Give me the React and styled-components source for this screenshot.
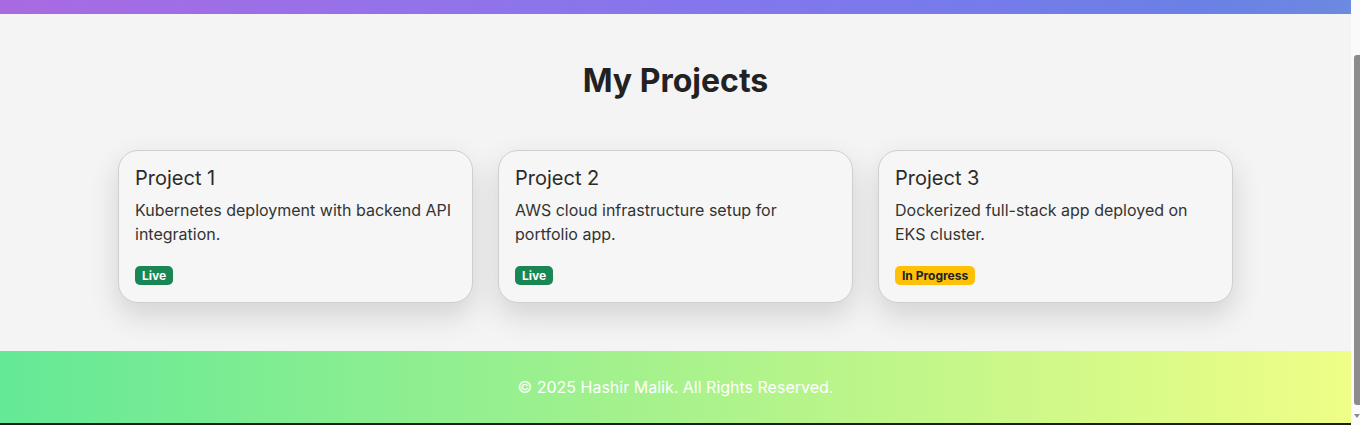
import React, { useLayoutEffect } from "react";
import styled, { createGlobalStyle } from "styled-components";

const GlobalStyle = createGlobalStyle`
  html, body { margin: 0; padding: 0; }
  body {
    margin-right: 9px;
    font-family: Inter, "Noto Sans", "Liberation Sans", sans-serif;
    background: #1e1e1e;
    color: #222;
  }
`;

const Scrollbar = styled.div`
  position: fixed;
  top: 0;
  right: 0;
  bottom: 0;
  width: 9px;
  background: #fafafa;
  z-index: 10;
`;

const Thumb = styled.div`
  position: absolute;
  top: 55px;
  left: 3px;
  right: 0;
  height: 350px;
  background: #8c8c8c;
  border-radius: 3px 0 0 3px;
`;

const Arrow = styled.div`
  position: absolute;
  bottom: 7px;
  right: 0;
  width: 0;
  height: 0;
  border-left: 3px solid transparent;
  border-right: 3px solid transparent;
  border-top: 4px solid #8c8c8c;
`;

const Header = styled.header`
  height: 81px;
  background: linear-gradient(90deg, #a96ae1 0%, #9472ea 30%, #7f78ec 60%, #6b80e6 88%, #6b8ae0 100%);
`;

const Main = styled.main`
  background: #f4f4f4;
  padding: 48px 0 48px;
`;

const Title = styled.h2`
  margin: 0 0 50px;
  font-size: 32px;
  line-height: 38px;
  font-weight: 700;
  text-align: center;
  color: #222;
`;

const Grid = styled.div`
  display: flex;
  justify-content: center;
  gap: 25px;
`;

const Card = styled.article`
  box-sizing: border-box;
  width: 355px;
  height: 153px;
  padding: 15px 16px 16px;
  background: #f6f6f6;
  border: 1px solid #cfcfcf;
  border-radius: 20px;
  box-shadow: 0 12px 30px rgba(0, 0, 0, 0.14);
`;

const CardTitle = styled.h3`
  margin: 0 0 8px;
  font-size: 20px;
  line-height: 24px;
  font-weight: 400;
  color: #2b2b2b;
`;

const CardText = styled.p`
  margin: 0 0 20px;
  font-size: 16px;
  line-height: 24px;
  color: #333;
`;

const Badge = styled.span`
  display: block;
  width: fit-content;
  padding: 0 7px;
  height: 19px;
  line-height: 19px;
  font-size: 12px;
  font-weight: 700;
  border-radius: 5px;
  background: ${(p) => (p.$status === "live" ? "#198754" : "#ffc107")};
  color: ${(p) => (p.$status === "live" ? "#fff" : "#222")};
`;

const Footer = styled.footer`
  height: 72px;
  display: flex;
  align-items: center;
  justify-content: center;
  background: linear-gradient(90deg, #64e996 0%, #a8f28c 50%, #effe86 100%);
  color: #fff;
  font-size: 16px;
`;

const Bottom = styled.div`
  height: 27px;
  background: #1e1e1e;
`;

const projects = [
  { name: "Project 1", text: "Kubernetes deployment with backend API integration.", status: "live", label: "Live" },
  { name: "Project 2", text: "AWS cloud infrastructure setup for portfolio app.", status: "live", label: "Live" },
  { name: "Project 3", text: "Dockerized full-stack app deployed on EKS cluster.", status: "progress", label: "In Progress" },
];

export default function App() {
  useLayoutEffect(() => {
    window.scrollTo(0, 67);
  }, []);
  return (
    <>
      <GlobalStyle />
      <Header />
      <Main>
        <Title>My Projects</Title>
        <Grid>
          {projects.map((p) => (
            <Card key={p.name}>
              <CardTitle>{p.name}</CardTitle>
              <CardText>{p.text}</CardText>
              <Badge $status={p.status}>{p.label}</Badge>
            </Card>
          ))}
        </Grid>
      </Main>
      <Footer>© 2025 Hashir Malik. All Rights Reserved.</Footer>
      <Bottom />
      <Scrollbar>
        <Thumb />
        <Arrow />
      </Scrollbar>
    </>
  );
}
